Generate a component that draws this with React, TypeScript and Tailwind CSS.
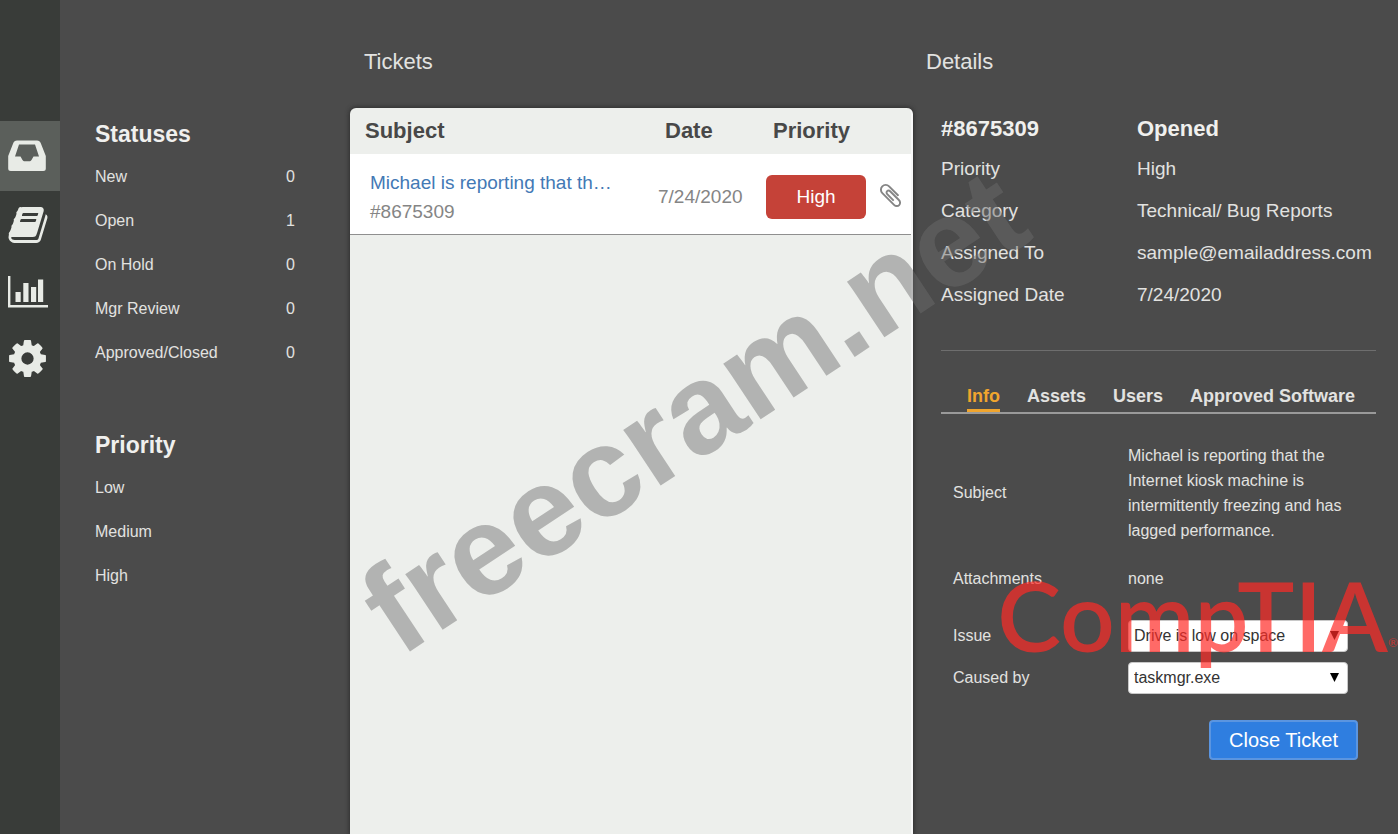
import React, { useState } from "react";

const STATUSES = [
  { label: "New", count: 0 },
  { label: "Open", count: 1 },
  { label: "On Hold", count: 0 },
  { label: "Mgr Review", count: 0 },
  { label: "Approved/Closed", count: 0 },
];

const PRIORITIES = ["Low", "Medium", "High"];

const DETAILS = [
  { label: "Priority", value: "High" },
  { label: "Category", value: "Technical/ Bug Reports" },
  { label: "Assigned To", value: "sample@emailaddress.com" },
  { label: "Assigned Date", value: "7/24/2020" },
];

const TABS = ["Info", "Assets", "Users", "Approved Software"];

const SUBJECT =
  "Michael is reporting that the Internet kiosk machine is intermittently freezing and has lagged performance.";
const SUBJECT_PREVIEW_LENGTH = 28;

function InboxIcon() {
  return (
    <svg width="38" height="32" viewBox="0 0 38 32" fill="currentColor" fillRule="evenodd" aria-hidden="true">
      <path d="M9 0.5h20c2 0 3 1 3.800 2.800l5 12.700v12.500a2.500 2.500 0 0 1-2.500 2.500H2.700a2.500 2.500 0 0 1-2.500-2.500V16L5.200 3.300C6 1.500 7 .5 9 .5zM11 4.500L7 16.500h5.500l2 3.500c.6 1 1.200 1.300 2.300 1.300h4.400c1.100 0 1.700-.3 2.300-1.300l2-3.500H31L27 4.500z" />
    </svg>
  );
}

function BookIcon() {
  return (
    <svg width="42" height="42" viewBox="0 0 1792 1792" fill="currentColor" aria-hidden="true">
      <path d="M1703 478q40 57 18 129l-275 906q-19 64-76.500 107.500t-122.500 43.500h-923q-77 0-148.500-53.500t-99.500-131.500q-24-67-2-127 0-4 3-27t4-37q1-8-3-21.500t-3-19.500q2-11 8-21t16.500-23.500 16.500-23.500q23-38 45-91.500t30-91.500q3-10 .5-30t-.5-28q3-11 17-28t17-23q21-36 42-92t25-90q1-9-2.500-32t.5-28q4-13 22-30.500t22-22.500q19-26 42.500-84.500t27.500-96.500q1-8-3-25.500t-2-26.500q2-8 9-18t18-23 17-21q8-12 16.500-30.500t15-35 16-36 19.500-32 26.500-23.500 36-11.500 47.500 5.500l-1 3q38-9 51-9h761q74 0 114 56t18 130l-274 906q-36 119-71.500 153.500t-128.500 34.500h-869q-27 0-38 15-11 16-1 43 24 70 144 70h923q29 0 56-15.500t35-41.500l300-987q7-22 5-57 38 15 59 43zm-1064 2q-4 13 2 22.500t20 9.500h608q13 0 25.500-9.500t16.500-22.500l21-64q4-13-2-22.500t-20-9.500h-608q-13 0-25.500 9.500t-16.500 22.500zm-83 256q-4 13 2 22.500t20 9.500h608q13 0 25.500-9.500t16.500-22.500l21-64q4-13-2-22.500t-20-9.500h-608q-13 0-25.500 9.500t-16.500 22.500z" />
    </svg>
  );
}

function ChartIcon() {
  return (
    <svg width="40" height="32" viewBox="0 0 40 32" fill="currentColor" aria-hidden="true">
      <path d="M0 0h2.400v29H40v2.400H0zM7.500 16h5.200v10H7.500zM15.300 7h5.200v19h-5.200zM23 11h5.200v15H23zM30 3.500h5.200V26H30z" />
    </svg>
  );
}

function GearIcon() {
  return (
    <svg width="43" height="43" viewBox="0 0 1792 1792" fill="currentColor" aria-hidden="true">
      <path d="M1152 896q0-106-75-181t-181-75-181 75-75 181 75 181 181 75 181-75 75-181zm512-109v222q0 12-8 23t-20 13l-185 28q-19 54-39 91 35 50 107 138 10 12 10 25t-9 23q-27 37-99 108t-94 71q-12 0-26-9l-138-108q-44 23-91 38-16 136-29 186-7 28-36 28h-222q-14 0-24.500-8.500t-11.500-21.500l-28-184q-49-16-90-37l-141 107q-10 9-25 9-14 0-25-11-126-114-165-168-7-10-7-23 0-12 8-23 15-21 51-66.500t54-70.500q-27-50-41-99l-183-27q-13-2-21-12.500t-8-23.500v-222q0-12 8-23t19-13l186-28q14-46 39-92-40-57-107-138-10-12-10-24 0-10 9-23 26-36 98.500-107.500t94.500-71.500q13 0 26 10l138 107q44-23 91-38 16-136 29-186 7-28 36-28h222q14 0 24.500 8.500t11.500 21.500l28 184q49 16 90 37l142-107q9-9 24-9 13 0 25 10 129 119 165 170 7 8 7 22 0 12-8 23-15 21-51 66.500t-54 70.500q26 50 41 98l183 28q13 2 21 12.500t8 23.500z" />
    </svg>
  );
}

function PaperclipIcon() {
  return (
    <svg width="27" height="27" viewBox="0 0 1792 1792" fill="currentColor" aria-hidden="true">
      <path d="M1596 1385q0 117-79 196t-196 79q-135 0-235-100l-777-776q-113-115-113-271 0-159 110-270t269-111q158 0 273 113l605 606q10 10 10 22 0 16-30.500 46.500t-46.500 30.500q-13 0-23-10l-606-607q-79-77-181-77-106 0-179 75t-73 181q0 105 76 181l776 777q63 63 145 63 64 0 106-42t42-106q0-82-63-145l-581-581q-26-24-60-24-29 0-48 19t-19 48q0 32 25 59l410 410q10 10 10 22 0 16-31 47t-47 31q-12 0-22-10l-410-410q-63-61-63-149 0-82 57-139t139-57q88 0 149 63l581 581q100 98 100 235z" />
    </svg>
  );
}

const NAV = [
  { label: "Tickets", icon: <InboxIcon /> },
  { label: "Knowledge base", icon: <BookIcon /> },
  { label: "Reports", icon: <ChartIcon /> },
  { label: "Settings", icon: <GearIcon /> },
];

type SelectFieldProps = {
  id: string;
  label: string;
  options: string[];
};

const SelectField: React.FC<SelectFieldProps> = ({ id, label, options }) => {
  const [value, setValue] = useState(options[0]);

  return (
    <div className="flex items-center">
      <label htmlFor={id} className="w-[175px] shrink-0">
        {label}
      </label>
      <div className="relative w-[220px]">
        <select
          id={id}
          value={value}
          onChange={e => setValue(e.target.value)}
          className="block h-8 w-full appearance-none rounded-sm border border-[#c8c8c8] bg-white pl-[5px] text-[#333333]"
        >
          {options.map(option => (
            <option key={option}>{option}</option>
          ))}
        </select>
        <svg
          className="pointer-events-none absolute right-[9px] top-[11px] text-black"
          width="9"
          height="9"
          viewBox="0 0 9 9"
          fill="currentColor"
          aria-hidden="true"
        >
          <path d="M0 0h9L4.500 9z" />
        </svg>
      </div>
    </div>
  );
};

const App: React.FC = () => {
  const [activeTab, setActiveTab] = useState("Info");

  return (
    <div className="relative grid min-h-screen grid-cols-[60px_290px_1fr_485px] overflow-hidden bg-[#4b4b4b] font-['Liberation_Sans',Arial,sans-serif] text-base text-[#e2e2e0]">
      <nav className="bg-[#393c39] pt-[121px]">
        {NAV.map((item, i) => (
          <button
            key={item.label}
            aria-label={item.label}
            className={
              i === 0
                ? "flex h-[70px] w-full items-center justify-center bg-[#5b5f5b] pr-[6px] text-[#e8ebe6]"
                : "flex h-[67px] w-full items-center justify-center pr-[5px] text-[#e8ebe6]"
            }
          >
            {item.icon}
          </button>
        ))}
      </nav>

      <aside className="pl-[35px] pr-[55px] pt-[120px]">
        <h2 className="mb-[7px] text-[23px] font-bold leading-7 text-[#f0f0ee]">Statuses</h2>
        <ul>
          {STATUSES.map(status => (
            <li key={status.label} className="flex h-11 items-center justify-between">
              <span>{status.label}</span>
              <span>{status.count}</span>
            </li>
          ))}
        </ul>
        <h2 className="mb-[7px] mt-14 text-[23px] font-bold leading-7 text-[#f0f0ee]">Priority</h2>
        <ul>
          {PRIORITIES.map(priority => (
            <li key={priority} className="flex h-11 items-center">
              {priority}
            </li>
          ))}
        </ul>
      </aside>

      <main className="flex flex-col pt-12">
        <h1 className="mb-8 pl-[14px] text-[22px] leading-7">Tickets</h1>
        <div className="flex-1 overflow-hidden rounded-t-md border-r-2 border-[#f8f8f8] bg-[#edefec] shadow-[0_0_4px_1px_#2f2f2f]">
          <table className="w-full table-fixed text-left text-[19px] text-[#858585]">
            <colgroup>
              <col />
              <col className="w-[108px]" />
              <col className="w-[108px]" />
              <col className="w-[37px]" />
            </colgroup>
            <thead>
              <tr className="h-[46px] text-[22px] text-[#484848]">
                <th className="pb-[2px] pl-[15px]">Subject</th>
                <th className="pb-[2px] pl-[7px]">Date</th>
                <th className="pb-[2px] pl-[7px]">Priority</th>
                <th aria-label="Attachment" />
              </tr>
            </thead>
            <tbody>
              <tr className="h-20 border-b border-[#8f8f8f] bg-white">
                <td className="pl-5 pt-[6px]">
                  <a href="#8675309" className="block whitespace-nowrap leading-[29px] text-[#4379b5]">
                    {SUBJECT.slice(0, SUBJECT_PREVIEW_LENGTH)}…
                  </a>
                  <span className="block leading-[29px]">#8675309</span>
                </td>
                <td className="pt-[6px]">7/24/2020</td>
                <td className="pt-[6px]">
                  <span className="flex h-11 w-[100px] items-center justify-center rounded-md bg-[#c54238] text-white">
                    High
                  </span>
                </td>
                <td className="pl-[3px] pt-[3px]">
                  <PaperclipIcon />
                </td>
              </tr>
            </tbody>
          </table>
        </div>
      </main>

      <section className="relative pl-[13px] pr-[22px] pt-12">
        <h1 className="mb-8 text-[22px] leading-7">Details</h1>
        <div className="pl-[15px]">
          <div className="flex h-10 items-center text-[22px] font-bold text-[#f0f0ee]">
            <h2 className="w-[196px]">#8675309</h2>
            <h2>Opened</h2>
          </div>
          <dl className="text-[19px]">
            {DETAILS.map(row => (
              <div key={row.label} className="flex h-[42px] items-center">
                <dt className="w-[196px] shrink-0">{row.label}</dt>
                <dd>{row.value}</dd>
              </div>
            ))}
          </dl>
          <hr className="mt-[34px] border-[#6e6e6e]" />

          <div role="tablist" className="mt-[33px] flex gap-[27px] border-b-2 border-[#9a9a9a] pl-[26px]">
            {TABS.map(tab => (
              <button
                key={tab}
                role="tab"
                aria-selected={activeTab === tab}
                onClick={() => setActiveTab(tab)}
                className={
                  activeTab === tab
                    ? "whitespace-nowrap border-b-3 border-[#f0a52e] text-lg leading-[25px] font-bold text-[#f0a52e]"
                    : "whitespace-nowrap border-b-3 border-transparent text-lg leading-[25px] font-bold"
                }
              >
                {tab}
              </button>
            ))}
          </div>

          <div className="pl-3 pr-[14px]">
            <div className="mt-[29px] flex items-center">
              <span className="w-[175px] shrink-0">Subject</span>
              <p className="w-[230px] leading-[25px]">{SUBJECT}</p>
            </div>
            <div className="mb-7 mt-[22px] flex h-[27px] items-center">
              <span className="w-[175px] shrink-0">Attachments</span>
              <span>none</span>
            </div>
            <div className="flex flex-col gap-[10px]">
              <SelectField id="issue" label="Issue" options={["Drive is low on space"]} />
              <SelectField id="cause" label="Caused by" options={["taskmgr.exe"]} />
            </div>
          </div>
          <div className="mt-[26px] flex justify-end pr-[18px]">
            <button className="h-10 w-[149px] rounded border-2 border-[#5b95e0] bg-[#2f7ee0] text-[20px] text-white">
              Close Ticket
            </button>
          </div>
        </div>

        {/* brand stamp */}
        <div className="pointer-events-none absolute right-0 top-[567px] flex items-end whitespace-nowrap font-[family-name:'Lato',sans-serif] leading-none text-[#ff2b26]/70">
          <span className="text-[96px] font-semibold">CompTIA</span>
          <span className="mb-[14px] text-[12px]">®</span>
        </div>
      </section>

      {/* watermark runs across the columns */}
      <div className="pointer-events-none absolute left-[400px] top-[551px] origin-[0_107px] -rotate-[33.5deg] whitespace-nowrap text-[127px] font-bold leading-none text-[#6c6c6c]/46">
        freecram.net
      </div>
    </div>
  );
};

export default App;
